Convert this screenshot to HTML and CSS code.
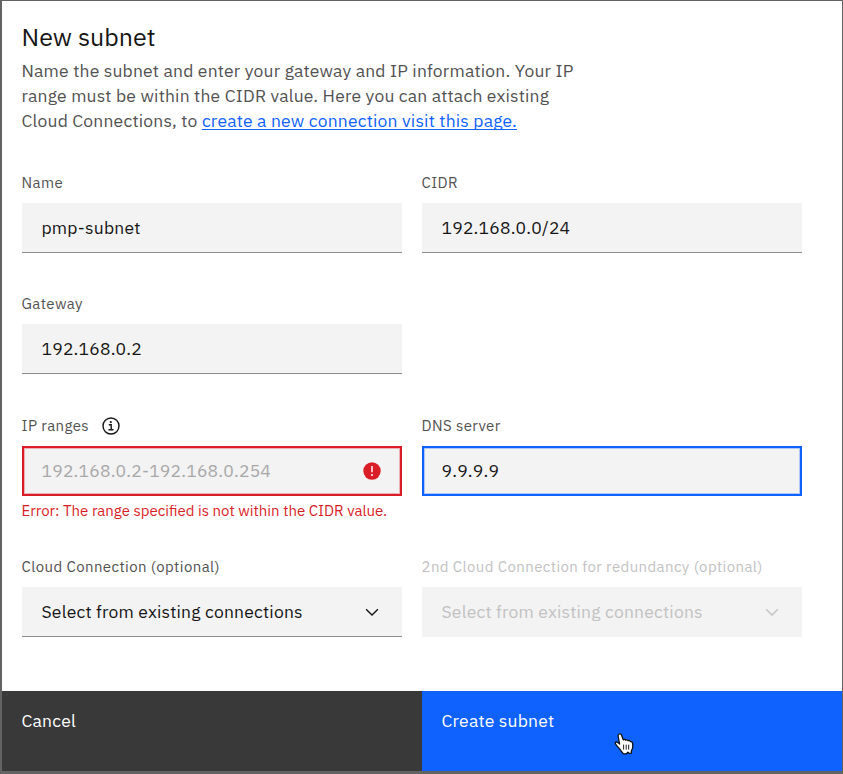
FILE: index.html
```html
<!DOCTYPE html>
<html lang="en">
<head>
<meta charset="utf-8">
<title>New subnet</title>
<link rel="stylesheet" href="styles.css">
</head>
<body>
<main class="modal">
  <header class="header">
    <h1>New subnet</h1>
    <p>Name the subnet and enter your gateway and IP information. Your IP<br>range must be within the CIDR value. Here you can attach existing<br>Cloud Connections, to <a href="#">create a new connection visit this page.</a></p>
  </header>
  <form class="fields">
    <div class="field">
      <div class="label">Name</div>
      <div class="box">pmp-subnet</div>
    </div>
    <div class="field">
      <div class="label">CIDR</div>
      <div class="box">192.168.0.0/24</div>
    </div>
    <div class="field gateway">
      <div class="label">Gateway</div>
      <div class="box">192.168.0.2</div>
    </div>
    <div class="field">
      <div class="label">IP ranges
        <svg class="info" viewBox="0 0 18 18" width="18" height="18"><circle cx="9" cy="9" r="8" fill="none" stroke="#161616" stroke-width="1.4"/><circle cx="8.8" cy="5.1" r="1.1" fill="#161616"/><path d="M6.8 7.8h2.4v5M6.5 12.8h5" fill="none" stroke="#161616" stroke-width="1.4"/></svg>
      </div>
      <div class="box invalid">192.168.0.2-192.168.0.254
        <svg viewBox="0 0 18 18" width="18" height="18"><circle cx="9" cy="9" r="8.7" fill="#da1e28"/><path d="M9 4v6.3" stroke="#fff" stroke-width="1.4"/><circle cx="9" cy="13.1" r="1" fill="#fff"/></svg>
      </div>
      <div class="error">Error: The range specified is not within the CIDR value.</div>
    </div>
    <div class="field">
      <div class="label">DNS server</div>
      <div class="box focused">9.9.9.9</div>
    </div>
    <div class="field">
      <div class="label">Cloud Connection (optional)</div>
      <div class="box">Select from existing connections
        <svg class="chevron" viewBox="0 0 18 18" width="18" height="18"><path d="M3.1 6.3 9 12.1l5.9-5.8" fill="none" stroke="currentColor" stroke-width="1.4"/></svg>
      </div>
    </div>
    <div class="field disabled">
      <div class="label">2nd Cloud Connection for redundancy (optional)</div>
      <div class="box">Select from existing connections
        <svg class="chevron" viewBox="0 0 18 18" width="18" height="18"><path d="M3.1 6.3 9 12.1l5.9-5.8" fill="none" stroke="currentColor" stroke-width="1.4"/></svg>
      </div>
    </div>
  </form>
  <footer class="actions">
    <button class="cancel" type="button">Cancel</button>
    <button class="create" type="button">Create subnet</button>
  </footer>
</main>
<svg class="pointer" viewBox="0 0 20 22" width="20" height="22"><path d="M5.3 1c1.1-.4 2 .2 2.3 1.2l1.6 4.7c.8-.7 2-.6 2.5.3.8-.6 2-.4 2.4.5 1-.5 2 0 2.3.9 1-.2 1.9.4 2.1 1.4.4 1.8.4 4-.2 5.8l-1 2.3.1 2-2.4.2-1-1.2-1.6 1.7H9.4L7.1 18c-1-2.1-2.7-3.4-4.2-5.2C1.8 11.6 1 10.4 1.4 9.6c.6-1.1 2.2-.5 3.1.4l1.1 1L4.1 3.2C3.9 2.2 4.3 1.4 5.3 1z" fill="#fff" stroke="#111" stroke-width="1.3" stroke-linejoin="round"/><path d="M9.6 11.6v5M12.2 11.6v5M14.7 11.6v5" stroke="#222" stroke-width="1"/></svg>
</body>
</html>
```
FILE: styles.css
```css
* { box-sizing: border-box; }

body {
  margin: 0;
  height: 774px;
  padding: 1px 1px 3px 2px;
  overflow: hidden;
  background: #636363;
  color: #161616;
  font-family: "IBM Plex Sans", Roboto, sans-serif;
  font-size: 17.5px;
  letter-spacing: .2px;
}

.modal {
  display: flex;
  flex-direction: column;
  height: 770px;
  background: #fff;
}

.header { height: 172px; padding: 20px 19.5px 0; }

h1 {
  margin: 0;
  font-size: 25px;
  font-weight: 400;
  line-height: 32px;
  letter-spacing: 0;
}

p {
  margin: 5px 0 0;
  color: #525252;
  line-height: 25px;
  letter-spacing: .19px;
  white-space: nowrap;
}

a {
  color: #0f62fe;
  text-decoration-thickness: 1px;
  text-underline-offset: 2px;
  text-decoration-skip-ink: none;
}

.fields {
  display: grid;
  grid-template-columns: 380px 380px;
  grid-template-rows: 121px 122px 141px 80px;
  column-gap: 20px;
  padding-left: 19.5px;
}

.gateway { grid-column: 1 / -1; width: 380px; }

.label {
  display: flex;
  align-items: center;
  gap: 13px;
  height: 20px;
  padding-bottom: 1px;
  margin-bottom: 10px;
  color: #525252;
  font-size: 15px;
  letter-spacing: .4px;
  white-space: nowrap;
}

.box {
  display: flex;
  align-items: center;
  justify-content: space-between;
  height: 50px;
  padding: 0 21px 0 20px;
  border-bottom: 1px solid #8d8d8d;
  background: #f3f3f3;
  white-space: nowrap;
}

.invalid {
  padding: 0 19px 1px 18px;
  border: 2px solid #da1e28;
  box-shadow: inset 0 0 0 1px rgb(218 30 40 / .3);
  color: #a8a8a8;
}

.focused {
  padding: 0 18px 1px;
  border: 2px solid #0f62fe;
  box-shadow: inset 0 0 0 1px rgb(15 98 254 / .3);
}

.error {
  margin-top: 5px;
  color: #da1e28;
  font-size: 15px;
  line-height: 20px;
  letter-spacing: 0;
  white-space: nowrap;
}

.disabled .label,
.disabled .box { color: #c2c2c2; }
.disabled .box { border-bottom-color: #f3f3f3; }

.actions {
  display: grid;
  grid-template-columns: 1fr 1fr;
  height: 80px;
  margin-top: auto;
}

button {
  display: flex;
  align-items: flex-start;
  padding: 19px 19.5px;
  border: 0;
  color: #fff;
  font: inherit;
  line-height: 21px;
  letter-spacing: .2px;
  text-align: left;
}

.cancel { background: #393939; }
.create { background: #0f62fe; }

.pointer { position: absolute; left: 614px; top: 733px; }
```
